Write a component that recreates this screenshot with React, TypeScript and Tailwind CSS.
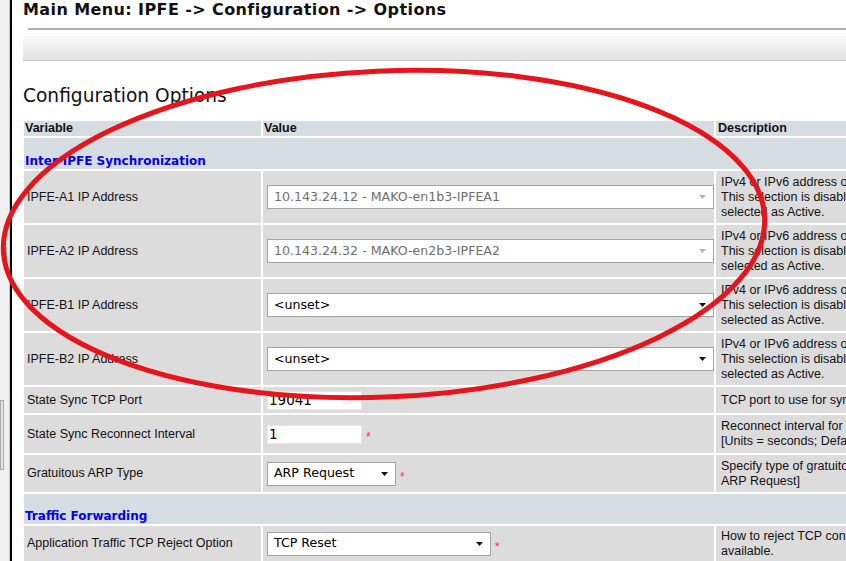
import type { ReactNode } from "react";

type SelectBoxProps = {
    value: string;
    disabled?: boolean;
    className: string;
};

function SelectBox({ value, disabled, className }: SelectBoxProps) {
    return (
        <div
            className={`flex h-[24px] items-center justify-between border border-[#a3a3a3] bg-white pl-[6px] pr-[7px] font-['DejaVu_Sans',sans-serif] text-[12.6px] ${className} ${disabled ? "text-[#6e6e6e]" : "text-black"}`}
        >
            <span className="whitespace-nowrap">{value}</span>
            <svg width="7" height="4" viewBox="0 0 7 4" aria-hidden="true">
                <path d="M0 0h7L3.5 4z" fill={disabled ? "#b4b4b4" : "#111111"} />
            </svg>
        </div>
    );
}

function Required() {
    return <span className="ml-[4px] mt-[6px] font-['Liberation_Sans',sans-serif] text-[12px] leading-none text-[#ff3030]">*</span>;
}

function TextInput({ value }: { value: string }) {
    return (
        <div className="flex h-[19px] w-[95px] items-center border border-[#e6e6e6] bg-white pl-[1px] font-['DejaVu_Sans',sans-serif] text-[13.5px] text-black">
            {value}
        </div>
    );
}

type RowProps = {
    label: string;
    height: string;
    value: ReactNode;
    description: string[];
};

function Row({ label, height, value, description }: RowProps) {
    return (
        <tr>
            <td className={`${height} bg-[#dcdcdc] pl-[3px] align-middle`}>{label}</td>
            <td className={`${height} bg-[#dcdcdc] pl-[4px] align-middle`}>
                <div className="flex items-center">{value}</div>
            </td>
            <td className={`${height} bg-[#dcdcdc] pl-[5px] align-middle leading-[15px] whitespace-nowrap`}>
                {description.map((line, i) => (
                    <div key={i}>{line}</div>
                ))}
            </td>
        </tr>
    );
}

function SectionRow({ title, height }: { title: string; height: string }) {
    return (
        <tr>
            <td
                colSpan={3}
                className={`${height} bg-[#d5dce2] pb-[1px] pl-[1px] align-bottom font-['DejaVu_Sans',sans-serif] text-[12px] font-bold leading-[13px] text-[#0000f0]`}
            >
                {title}
            </td>
        </tr>
    );
}

const ipDescription = ["IPv4 or IPv6 address of the IPFE server.", "This selection is disabled while the IPFE is", "selected as Active."];

export default function App() {
    return (
        <div className="relative flex h-[561px] w-[846px] overflow-hidden bg-white">
            <div className="flex w-[10px] shrink-0 flex-col border-r border-[#c9c9c9] bg-[#f0f0f0]">
                <div className="ml-[6px] mt-[247px] h-[26px] w-[1px] bg-[#a0a0a0]" />
                <div className="mt-[127px] h-[70px] w-[4px] border border-[#a8a8a8] bg-[#e4e4e4]" />
            </div>
            <div className="w-[2px] shrink-0 bg-black" />

            <div className="min-w-0 flex-1 overflow-hidden pl-[11px]">
                <h1 className="h-[19px] whitespace-nowrap font-['DejaVu_Sans',sans-serif] text-[16px] font-bold leading-[19px] tracking-[0.4px] text-[#111]">
                    Main Menu: IPFE -&gt; Configuration -&gt; Options
                </h1>
                <div className="ml-[5px] mt-[9px] h-[2px] bg-[#b0b0b0]" />
                <div className="mt-[6px] h-[25px] border-b border-[#c4c4c4] bg-linear-to-b from-[#fafafa] to-[#e2e2e2]" />

                <h2 className="mt-[24px] h-[22px] whitespace-nowrap font-['DejaVu_Sans',sans-serif] text-[18.6px] leading-[22px] text-[#111]">
                    Configuration Options
                </h2>

                <table className="-ml-[1px] mt-[12px] w-[1096px] table-fixed border-separate border-spacing-[2px] font-['Liberation_Sans',sans-serif] text-[12.5px] text-[#111]">
                    <colgroup>
                        <col className="w-[237px]" />
                        <col className="w-[451px]" />
                        <col className="w-[400px]" />
                    </colgroup>
                    <thead>
                        <tr className="text-left font-bold">
                            <th className="h-[15px] bg-[#d5dce2] pl-[1px] align-middle leading-[15px]">Variable</th>
                            <th className="h-[15px] bg-[#d5dce2] pl-[1px] align-middle leading-[15px]">Value</th>
                            <th className="h-[15px] bg-[#d5dce2] pl-[2px] align-middle leading-[15px]">Description</th>
                        </tr>
                    </thead>
                    <tbody>
                        <SectionRow title="Inter-IPFE Synchronization" height="h-[31px]" />
                        <Row
                            label="IPFE-A1 IP Address"
                            height="h-[52px]"
                            value={<SelectBox value="10.143.24.12 - MAKO-en1b3-IPFEA1" disabled className="w-[447px]" />}
                            description={ipDescription}
                        />
                        <Row
                            label="IPFE-A2 IP Address"
                            height="h-[52px]"
                            value={<SelectBox value="10.143.24.32 - MAKO-en2b3-IPFEA2" disabled className="w-[447px]" />}
                            description={ipDescription}
                        />
                        <Row
                            label="IPFE-B1 IP Address"
                            height="h-[52px]"
                            value={<SelectBox value="<unset>" className="w-[447px]" />}
                            description={ipDescription}
                        />
                        <Row
                            label="IPFE-B2 IP Address"
                            height="h-[52px]"
                            value={<SelectBox value="<unset>" className="w-[447px]" />}
                            description={ipDescription}
                        />
                        <Row
                            label="State Sync TCP Port"
                            height="h-[26px]"
                            value={<TextInput value="19041" />}
                            description={["TCP port to use for synchronization."]}
                        />
                        <Row
                            label="State Sync Reconnect Interval"
                            height="h-[38px]"
                            value={
                                <>
                                    <TextInput value="1" />
                                    <Required />
                                </>
                            }
                            description={["Reconnect interval for state synchronization.", "[Units = seconds; Default = 1]"]}
                        />
                        <Row
                            label="Gratuitous ARP Type"
                            height="h-[37px]"
                            value={
                                <>
                                    <SelectBox value="ARP Request" className="w-[129px]" />
                                    <Required />
                                </>
                            }
                            description={["Specify type of gratuitous ARP to send. [Default =", "ARP Request]"]}
                        />
                        <SectionRow title="Traffic Forwarding" height="h-[30px]" />
                        <Row
                            label="Application Traffic TCP Reject Option"
                            height="h-[35px]"
                            value={
                                <>
                                    <SelectBox value="TCP Reset" className="w-[224px]" />
                                    <Required />
                                </>
                            }
                            description={["How to reject TCP connections when no server is", "available."]}
                        />
                    </tbody>
                </table>
            </div>

            <svg className="pointer-events-none absolute inset-0" width="846" height="561" viewBox="0 0 846 561" aria-hidden="true">
                <ellipse
                    cx="384"
                    cy="234"
                    rx="381"
                    ry="163"
                    transform="rotate(-2.5 384 234)"
                    fill="none"
                    stroke="#e8141c"
                    strokeWidth="5"
                />
            </svg>
        </div>
    );
}
